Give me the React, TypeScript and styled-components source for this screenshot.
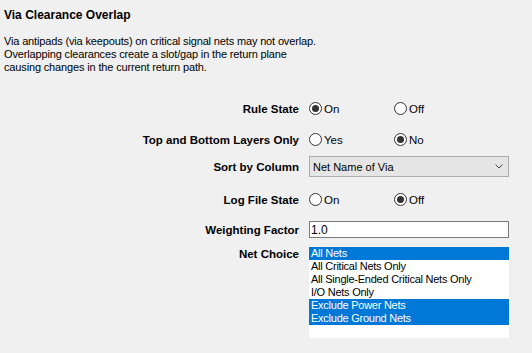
import React from 'react';
import styled, { createGlobalStyle } from 'styled-components';

const GlobalStyle = createGlobalStyle`
  html, body {
    margin: 0;
    padding: 0;
    background: #f0f0f0;
  }
  body {
    font-family: "Liberation Sans", Arial, sans-serif;
    font-size: 11px;
    color: #000;
  }
`;

const Page = styled.div`
  width: 532px;
  height: 353px;
  padding: 8px 4px 0 4px;
  box-sizing: border-box;
  overflow: hidden;
`;

const Title = styled.h1`
  margin: 0;
  font-size: 12px;
  font-weight: 700;
  line-height: 14px;
`;

const Description = styled.p`
  margin: 13px 0 0 0;
  font-size: 11px;
  line-height: 13px;
  letter-spacing: -0.15px;
`;

const Form = styled.div`
  display: flex;
  flex-direction: column;
  margin-top: 24px;
`;

const Row = styled.div<{ $gap: number; $height: number; $top?: boolean }>`
  display: grid;
  grid-template-columns: 295px 200px;
  column-gap: 10px;
  align-items: ${({ $top }) => ($top ? 'start' : 'center')};
  height: ${({ $height }) => $height}px;
  margin-top: ${({ $gap }) => $gap}px;
`;

const Label = styled.div<{ $top?: boolean }>`
  text-align: right;
  font-weight: 700;
  font-size: 11.5px;
  padding-top: ${({ $top }) => ($top ? '1px' : '0')};
`;

const RadioGroup = styled.div`
  display: flex;
  align-items: center;
`;

const RadioOption = styled.label`
  display: flex;
  align-items: center;
  width: 85px;
  gap: 2px;
  font-size: 11.5px;
`;

const RadioCircle = styled.span<{ $checked: boolean }>`
  width: 11px;
  height: 11px;
  border: 1px solid #333;
  border-radius: 50%;
  background: #fff;
  display: flex;
  align-items: center;
  justify-content: center;

  &::after {
    content: '';
    width: 7px;
    height: 7px;
    border-radius: 50%;
    background: #333;
    display: ${({ $checked }) => ($checked ? 'block' : 'none')};
  }
`;

const Select = styled.div`
  height: 21px;
  border: 1px solid #adadad;
  background: #e5e5e5;
  box-sizing: border-box;
  display: flex;
  align-items: center;
  justify-content: space-between;
  padding: 0 5px 0 3px;
`;

const TextInput = styled.div`
  height: 17px;
  border: 1px solid #7a7a7a;
  background: #fff;
  box-sizing: border-box;
  display: flex;
  align-items: center;
  padding-left: 1px;
  font-size: 12px;
`;

const ListBox = styled.div`
  height: 91px;
  background: #fff;
  display: flex;
  flex-direction: column;
`;

const ListItem = styled.div<{ $selected: boolean }>`
  height: 13px;
  line-height: 13px;
  padding-left: 2px;
  letter-spacing: -0.25px;
  background: ${({ $selected }) => ($selected ? '#0078d7' : 'transparent')};
  color: ${({ $selected }) => ($selected ? '#fff' : '#000')};
`;

const Radio = ({ label, checked }: { label: string; checked: boolean }) => (
  <RadioOption>
    <RadioCircle $checked={checked} />
    <span>{label}</span>
  </RadioOption>
);

const nets = [
  { name: 'All Nets', selected: true },
  { name: 'All Critical Nets Only', selected: false },
  { name: 'All Single-Ended Critical Nets Only', selected: false },
  { name: 'I/O Nets Only', selected: false },
  { name: 'Exclude Power Nets', selected: true },
  { name: 'Exclude Ground Nets', selected: true },
];

export default function App() {
  return (
    <>
      <GlobalStyle />
      <Page>
        <Title>Via Clearance Overlap</Title>
        <Description>
          Via antipads (via keepouts) on critical signal nets may not overlap.
          <br />
          Overlapping clearances create a slot/gap in the return plane
          <br />
          causing changes in the current return path.
        </Description>
        <Form>
          <Row $gap={0} $height={21}>
            <Label>Rule State</Label>
            <RadioGroup>
              <Radio label="On" checked />
              <Radio label="Off" checked={false} />
            </RadioGroup>
          </Row>
          <Row $gap={10} $height={21}>
            <Label>Top and Bottom Layers Only</Label>
            <RadioGroup>
              <Radio label="Yes" checked={false} />
              <Radio label="No" checked />
            </RadioGroup>
          </Row>
          <Row $gap={6} $height={21}>
            <Label>Sort by Column</Label>
            <Select>
              <span>Net Name of Via</span>
              <svg width="8" height="5" viewBox="0 0 8 5">
                <path d="M0.5 0.5 L4 4 L7.5 0.5" fill="none" stroke="#444" strokeWidth="1" />
              </svg>
            </Select>
          </Row>
          <Row $gap={12} $height={21}>
            <Label>Log File State</Label>
            <RadioGroup>
              <Radio label="On" checked={false} />
              <Radio label="Off" checked />
            </RadioGroup>
          </Row>
          <Row $gap={11} $height={17}>
            <Label>Weighting Factor</Label>
            <TextInput>1.0</TextInput>
          </Row>
          <Row $gap={9} $height={91} $top>
            <Label $top>Net Choice</Label>
            <ListBox>
              {nets.map((n) => (
                <ListItem key={n.name} $selected={n.selected}>
                  {n.name}
                </ListItem>
              ))}
            </ListBox>
          </Row>
        </Form>
      </Page>
    </>
  );
}
